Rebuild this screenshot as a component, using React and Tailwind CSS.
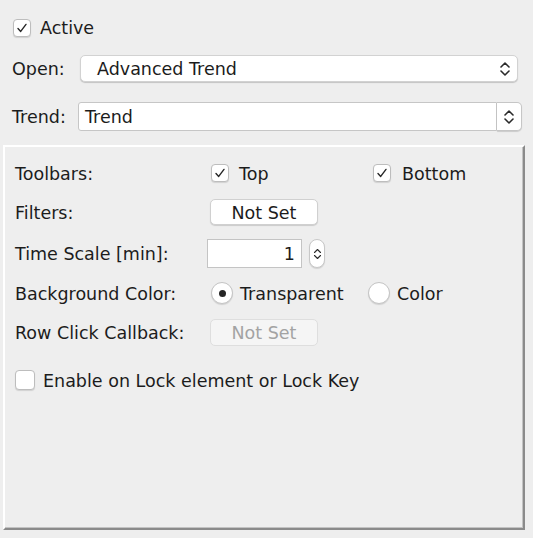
import React from "react";

function Check({ checked, size = 18 }) {
  return (
    <span
      className={`flex shrink-0 items-center justify-center rounded-[4px] border border-[#bdbdbd] bg-white shadow-[0_1px_1px_rgba(0,0,0,0.12)] ${
        size === 18 ? "h-[18px] w-[18px]" : "h-[20px] w-[20px]"
      }`}
    >
      {checked && (
        <svg width="12" height="12" viewBox="0 0 12 12">
          <path d="M2 6.6 L4.7 9.4 L10 2.4" fill="none" stroke="#262626" strokeWidth="1.4" strokeLinecap="round" strokeLinejoin="round" />
        </svg>
      )}
    </span>
  );
}

function Radio({ on }) {
  return (
    <span className="flex h-[22px] w-[22px] shrink-0 items-center justify-center rounded-full border border-[#c4c4c4] bg-white shadow-[0_1px_1px_rgba(0,0,0,0.12)]">
      {on && <span className="h-[7px] w-[7px] rounded-full bg-[#262626]" />}
    </span>
  );
}

function Chevrons({ w = 12, h = 18, sw = 1.6 }) {
  return (
    <svg width={w} height={h} viewBox="0 0 12 18">
      <path d="M2 7 L6 3 L10 7" fill="none" stroke="#2a2a2a" strokeWidth={sw} strokeLinecap="round" strokeLinejoin="round" />
      <path d="M2 11 L6 15 L10 11" fill="none" stroke="#2a2a2a" strokeWidth={sw} strokeLinecap="round" strokeLinejoin="round" />
    </svg>
  );
}

function T({ children, className = "" }) {
  return <span className={`pt-[3px] ${className}`}>{children}</span>;
}

export default function App() {
  return (
    <div className="h-[538px] w-[533px] overflow-hidden bg-[#eeeeee] font-['DejaVu_Sans',sans-serif] text-[17.5px] leading-none text-[#1c1c1c]">
      {/* Active */}
      <div className="ml-[13px] mt-[18px] flex h-[19px] items-center gap-[9px]">
        <Check checked />
        <T>Active</T>
      </div>

      {/* Open */}
      <div className="mt-[18px] flex h-[27px] items-center">
        <T className="w-[80px] pl-[12px]">Open:</T>
        <div className="flex h-[27px] w-[438px] items-center justify-between rounded-[5px] border border-[#d2d2d2] bg-white pl-[16px] pr-[6px] shadow-[0_1px_1px_rgba(0,0,0,0.18)]">
          <T>Advanced Trend</T>
          <Chevrons />
        </div>
      </div>

      {/* Trend */}
      <div className="mt-[20px] flex h-[29px] items-center">
        <T className="w-[78px] pl-[12px]">Trend:</T>
        <div className="flex h-[29px] w-[444px] items-stretch">
          <div className="flex flex-1 items-center rounded-l-[3px] border border-[#c6c6c6] bg-white pl-[6px]">
            <T>Trend</T>
          </div>
          <div className="flex w-[25px] items-center justify-center rounded-r-[5px] border border-l-0 border-[#c6c6c6] bg-white shadow-[0_1px_1px_rgba(0,0,0,0.15)]">
            <Chevrons />
          </div>
        </div>
      </div>

      {/* Panel */}
      <div className="ml-[3px] mt-[14px] h-[385px] w-[522px] border-2 border-b-[#8a8a8a] border-l-white border-r-[#8a8a8a] border-t-white pl-[10px] pt-[13px] shadow-[inset_-1px_-1px_0_#c2c2c2]">
        {/* Toolbars */}
        <div className="flex h-[26px] items-center">
          <T className="w-[192px]">Toolbars:</T>
          <div className="flex w-[166px] items-center gap-[10px] pl-[4px]">
            <Check checked />
            <T>Top</T>
          </div>
          <div className="flex items-center gap-[11px]">
            <Check checked />
            <T>Bottom</T>
          </div>
        </div>

        {/* Filters */}
        <div className="mt-[13px] flex h-[26px] items-center">
          <T className="w-[195px]">Filters:</T>
          <div className="flex h-[26px] w-[108px] items-center justify-center rounded-[5px] border border-[#d0d0d0] bg-white shadow-[0_1px_1px_rgba(0,0,0,0.15)]">
            <T>Not Set</T>
          </div>
        </div>

        {/* Time Scale */}
        <div className="mt-[14px] flex h-[29px] items-center">
          <T className="w-[192px]">Time Scale [min]:</T>
          <div className="flex h-[29px] w-[95px] items-center justify-end border border-[#c4c4c4] bg-white pr-[6px]">
            <T>1</T>
          </div>
          <div className="ml-[7px] flex h-[29px] w-[16px] items-center justify-center rounded-full border border-[#c8c8c8] bg-white shadow-[0_1px_1px_rgba(0,0,0,0.12)]">
            <Chevrons w={9} h={16} sw={1.5} />
          </div>
        </div>

        {/* Background Color */}
        <div className="mt-[12px] flex h-[26px] items-center">
          <T className="w-[192px]">Background Color:</T>
          <div className="flex w-[161px] items-center gap-[7px] pl-[4px]">
            <Radio on />
            <T>Transparent</T>
          </div>
          <div className="flex items-center gap-[7px]">
            <Radio />
            <T>Color</T>
          </div>
        </div>

        {/* Row Click Callback */}
        <div className="mt-[13px] flex h-[27px] items-center">
          <T className="w-[195px]">Row Click Callback:</T>
          <div className="flex h-[27px] w-[108px] items-center justify-center rounded-[5px] border border-[#dedede] bg-[#f5f5f5] text-[#a3a3a3]">
            <T>Not Set</T>
          </div>
        </div>

        {/* Enable */}
        <div className="mt-[21px] flex h-[26px] items-center gap-[8px]">
          <Check size={20} />
          <T>Enable on Lock element or Lock Key</T>
        </div>
      </div>
    </div>
  );
}
